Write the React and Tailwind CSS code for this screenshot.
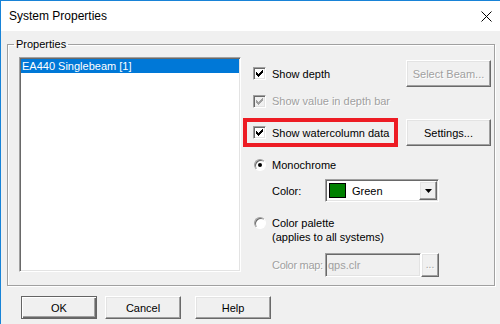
import React from 'react'

const font = { fontFamily: '"Liberation Sans", Arial, sans-serif' }

const raised = 'bg-[#f0f0f0] border border-t-white border-l-white border-b-[#696969] border-r-[#696969] shadow-[inset_-1px_-1px_0_#a0a0a0,inset_1px_1px_0_#e3e3e3]'
const sunken = 'border border-t-[#a0a0a0] border-l-[#a0a0a0] border-b-white border-r-white shadow-[inset_1px_1px_0_#696969,inset_-1px_-1px_0_#e3e3e3]'

// classic 7x7 tick, one column at a time
const tick = [[0, 2], [1, 3], [2, 4], [3, 3], [4, 2], [5, 1], [6, 0]]

function CheckBox({ disabled }) {
  return (
    <div className={`w-[13px] h-[13px] shrink-0 ${sunken} ${disabled ? 'bg-[#f0f0f0]' : 'bg-white'}`}>
      <svg width="11" height="11" viewBox="0 0 11 11" shapeRendering="crispEdges">
        {tick.map(([x, y]) => (
          <rect key={x} x={x + 2} y={y + 2} width="1" height="3" fill={disabled ? '#a0a0a0' : '#000'} />
        ))}
      </svg>
    </div>
  )
}

function Radio({ checked }) {
  return (
    <div className="w-[12px] h-[12px] shrink-0 rounded-full border border-t-[#a0a0a0] border-l-[#a0a0a0] border-b-white border-r-white bg-white shadow-[inset_1px_1px_0_#696969] flex items-center justify-center">
      {checked && <div className="w-[4px] h-[4px] rounded-full bg-black" />}
    </div>
  )
}

function Button({ children, disabled, className = '' }) {
  return (
    <div className={`${raised} flex items-center justify-center whitespace-nowrap ${disabled ? 'text-[#a0a0a0] [text-shadow:1px_1px_0_#fff]' : 'text-black'} ${className}`}>
      {children}
    </div>
  )
}

export default function App() {
  return (
    <div className="w-[500px] h-[324px] overflow-hidden bg-white border-t border-l border-[#1883d7] flex flex-col text-[11px] leading-[14px] text-black" style={font}>
      {/* title bar */}
      <div className="h-[30px] shrink-0 flex items-center justify-between pl-[8px] pr-[8px]">
        <span className="text-[12px]">System Properties</span>
        <svg width="11" height="11" viewBox="0 0 11 11">
          <path d="M0.5 0.5 L10.5 10.5 M10.5 0.5 L0.5 10.5" stroke="#000" strokeWidth="1" />
        </svg>
      </div>

      <div className="flex-1 bg-[#f0f0f0] pl-[6px] pt-[7px]">
        <fieldset className="w-[488px] border border-[#a0a0a0] shadow-[inset_1px_1px_0_#fff,1px_1px_0_#fff] pl-[11px] pr-[3px] pt-[6px] pb-[8px]">
          <legend className="ml-[-5px] px-[2px] leading-[13px]">Properties</legend>
          <div className="flex">
            {/* list */}
            <div className={`w-[222px] h-[215px] shrink-0 bg-white ${sunken} p-[1px]`}>
              <div className="h-[14px] bg-[#0078d7] text-white pl-[1px] leading-[14px]">EA440 Singlebeam [1]</div>
            </div>

            {/* options */}
            <div className="flex-1 ml-[2px] flex flex-col whitespace-nowrap">
              <div className="mt-[3px] h-[27px] flex items-center justify-between pl-[10px]">
                <div className="flex items-center gap-[6px]">
                  <CheckBox />
                  <span>Show depth</span>
                </div>
                <Button disabled className="w-[85px] h-[27px]">Select Beam...</Button>
              </div>

              <div className="mt-[7px] h-[14px] flex items-center gap-[6px] pl-[10px] text-[#a0a0a0]">
                <CheckBox disabled />
                <span className="[text-shadow:1px_1px_0_#fff]">Show value in depth bar</span>
              </div>

              <div className="mt-[10px] h-[29px] flex items-center justify-between">
                <div className="w-[155px] h-[29px] border-[4px] border-[#ed1c24] flex items-center gap-[6px] pl-[6px]">
                  <CheckBox />
                  <span>Show watercolumn data</span>
                </div>
                <Button className="w-[85px] h-[27px]">Settings...</Button>
              </div>

              <div className="mt-[11px] h-[14px] flex items-center gap-[6px] pl-[11px]">
                <Radio checked />
                <span>Monochrome</span>
              </div>

              <div className="mt-[7px] h-[23px] flex items-center pl-[29px]">
                <span className="w-[53px] shrink-0">Color:</span>
                <div className={`w-[114px] h-[23px] bg-white ${sunken} flex items-center pl-[3px] pr-[1px]`}>
                  <div className="w-[17px] h-[15px] border border-black bg-[#008000]" />
                  <span className="ml-[6px] flex-1">Green</span>
                  <div className={`${raised} w-[18px] h-[19px] flex items-center justify-center`}>
                    <svg width="7" height="4" viewBox="0 0 7 4"><path d="M0 0 H7 L3.5 4 Z" fill="#000" /></svg>
                  </div>
                </div>
              </div>

              <div className="mt-[14px] flex gap-[6px] pl-[11px]">
                <div className="mt-[1px]"><Radio /></div>
                <div className="flex flex-col">
                  <span>Color palette</span>
                  <span>(applies to all systems)</span>
                </div>
              </div>

              <div className="mt-[9px] h-[24px] flex items-center pl-[29px] text-[#a0a0a0]">
                <span className="w-[53px] shrink-0 overflow-hidden tracking-[-0.3px] [text-shadow:1px_1px_0_#fff]">Color map:</span>
                <div className={`w-[96px] h-[24px] shrink-0 bg-[#f0f0f0] ${sunken} flex items-center pl-[2px]`}>qps.clr</div>
                <Button disabled className="w-[18px] h-[24px] shrink-0 text-[10px]">...</Button>
              </div>
            </div>
          </div>
        </fieldset>

        {/* dialog buttons */}
        <div className="mt-[10px] flex pl-[14px]">
          <div className="w-[76px] h-[23px] border border-[#646464] bg-[#f0f0f0] shadow-[inset_1px_1px_0_#fff,inset_-1px_-1px_0_#696969,inset_-2px_-2px_0_#a0a0a0] flex items-center justify-center">OK</div>
          <Button className="ml-[8px] w-[76px] h-[23px]">Cancel</Button>
          <Button className="ml-[14px] w-[76px] h-[23px]">Help</Button>
        </div>
      </div>
    </div>
  )
}
